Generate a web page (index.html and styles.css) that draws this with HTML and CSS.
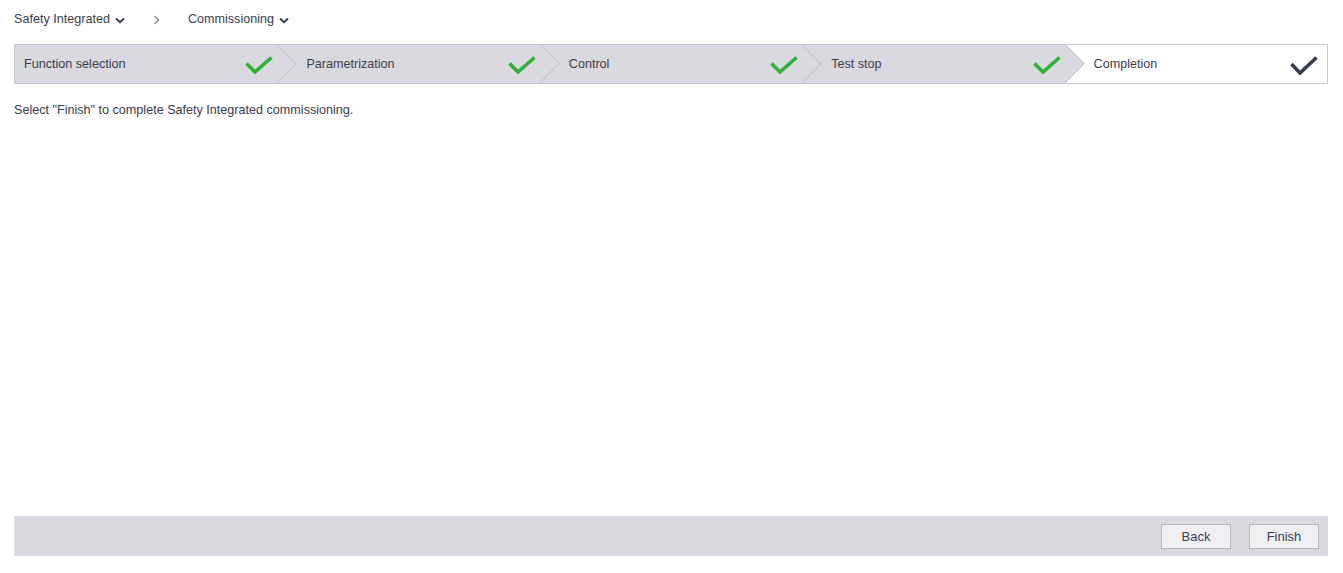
FILE: index.html
```html
<!DOCTYPE html>
<html>
<head>
<meta charset="utf-8">
<link rel="stylesheet" href="styles.css">
</head>
<body>
<div class="page">
  <nav class="crumbs">
    <span class="crumb">Safety Integrated
      <svg class="dd" width="10" height="7" viewBox="0 0 10 7"><path d="M1 1.5 L5 5.2 L9 1.5" fill="none" stroke="#3a3d52" stroke-width="2"/></svg>
    </span>
    <svg class="sep" width="7" height="10" viewBox="0 0 7 10"><path d="M1.5 1 L5.5 5 L1.5 9" fill="none" stroke="#8a8c99" stroke-width="1.5"/></svg>
    <span class="crumb">Commissioning
      <svg class="dd" width="10" height="7" viewBox="0 0 10 7"><path d="M1 1.5 L5 5.2 L9 1.5" fill="none" stroke="#3a3d52" stroke-width="2"/></svg>
    </span>
  </nav>

  <div class="stepper">
    <div class="step done first"><span class="label">Function selection</span>
      <svg class="check" width="28" height="18" viewBox="0 0 28 18"><path d="M1.5 7.5 L10 16 L26.5 1.5" fill="none" stroke="#2eb135" stroke-width="3.6"/></svg>
    </div>
    <div class="step done"><span class="label">Parametrization</span>
      <svg class="check" width="28" height="18" viewBox="0 0 28 18"><path d="M1.5 7.5 L10 16 L26.5 1.5" fill="none" stroke="#2eb135" stroke-width="3.6"/></svg>
    </div>
    <div class="step done"><span class="label">Control</span>
      <svg class="check" width="28" height="18" viewBox="0 0 28 18"><path d="M1.5 7.5 L10 16 L26.5 1.5" fill="none" stroke="#2eb135" stroke-width="3.6"/></svg>
    </div>
    <div class="step done"><span class="label">Test stop</span>
      <svg class="check" width="28" height="18" viewBox="0 0 28 18"><path d="M1.5 7.5 L10 16 L26.5 1.5" fill="none" stroke="#2eb135" stroke-width="3.6"/></svg>
    </div>
    <div class="step current"><span class="label">Completion</span>
      <svg class="check dark" width="28" height="19" viewBox="0 0 28 19"><path d="M1.5 8 L10 17 L26.5 1.5" fill="none" stroke="#3a3d52" stroke-width="3.6"/></svg>
    </div>
  </div>

  <main class="content">
    <p class="msg">Select "Finish" to complete Safety Integrated commissioning.</p>
  </main>

  <footer class="footer">
    <button class="btn">Back</button>
    <button class="btn">Finish</button>
  </footer>
</div>
</body>
</html>
```
FILE: styles.css
```css
html, body {
  margin: 0;
  padding: 0;
  height: 100%;
  background: #ffffff;
}
body {
  font-family: Arial, "Liberation Sans", sans-serif;
  font-size: 12.6px;
  color: #3a3d4d;
}
.page {
  height: 573px;
  box-sizing: border-box;
  padding: 0 15px 17px 14px;
  display: flex;
  flex-direction: column;
}
.crumbs {
  height: 38px;
  margin-bottom: 6px;
  display: flex;
  align-items: center;
  flex: none;
}
.crumb {
  display: inline-flex;
  align-items: center;
  color: #3a3d4d;
  font-size: 12.6px;
}
.crumb .dd {
  margin-left: 5px;
  margin-top: 2px;
}
.sep {
  margin: 2px 28px 0 28px;
}
.stepper {
  flex: none;
  display: grid;
  grid-template-columns: repeat(5, 1fr);
  height: 40px;
  box-sizing: border-box;
  border: 1px solid #c6c7ce;
  background: #ffffff;
}
.step {
  position: relative;
  display: flex;
  align-items: center;
  justify-content: space-between;
  padding: 0 10px 0 29px;
  box-sizing: border-box;
  min-width: 0;
}
.step.first {
  padding-left: 9px;
}
.step.done {
  background: #d9d9df;
}
.step.done::after {
  content: "";
  position: absolute;
  z-index: 2;
  top: 4px;
  right: -14px;
  width: 28px;
  height: 28px;
  background: #d9d9df;
  border-top: 1px solid #c0c1c9;
  border-right: 1px solid #c0c1c9;
  transform: rotate(45deg);
  clip-path: polygon(0 0, 100% 0, 100% 100%);
}
.step.done .check {
  margin-right: -6px;
}
.label {
  font-size: 12.6px;
  color: #3a3d4d;
  padding-bottom: 1px;
}
.check {
  flex: none;
  margin-top: 2px;
}
.check.dark {
  margin-right: -1px;
}
.content {
  flex: 1 1 auto;
}
.msg {
  margin: 19px 0 0 0;
  font-size: 12.6px;
  color: #3a3d4d;
}
.footer {
  flex: none;
  height: 40px;
  background: #d9d9df;
  display: flex;
  align-items: center;
  justify-content: flex-end;
  gap: 18px;
  padding-right: 9px;
  box-sizing: border-box;
}
.btn {
  width: 70px;
  height: 25px;
  font-family: Arial, "Liberation Sans", sans-serif;
  font-size: 13px;
  color: #3a3d52;
  background: #f0f0f3;
  border: 1px solid #b6b7c0;
  border-radius: 0;
  padding: 0;
}
```
